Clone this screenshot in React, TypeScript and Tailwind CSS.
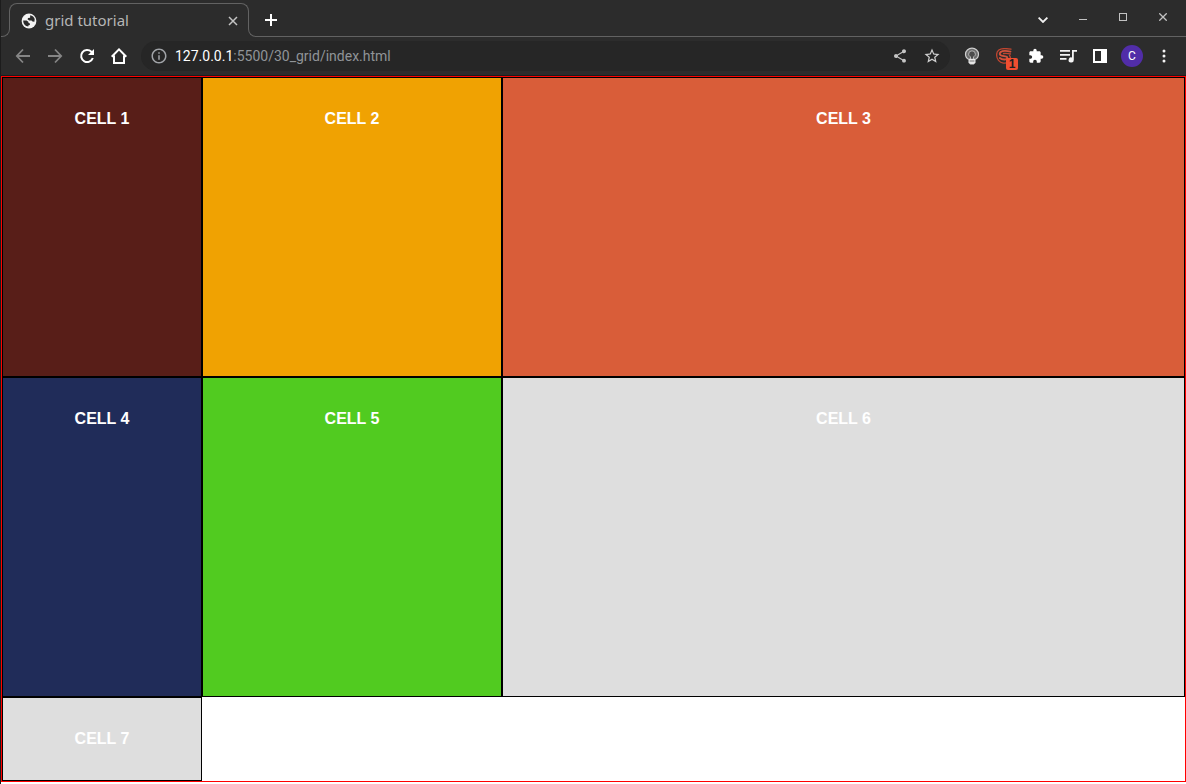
import type { ReactNode } from "react";
import { MdExtension, MdShare, MdStarOutline, MdInfoOutline } from "react-icons/md";

function IconButton({ label, children, className = "" }: { label: string; children: ReactNode; className?: string }) {
  return (
    <button type="button" aria-label={label} className={`flex h-8 w-8 shrink-0 items-center justify-center ${className}`}>
      {children}
    </button>
  );
}

function TabStrip() {
  return (
    <div className="flex h-[37px] items-stretch text-[#f1f1f1]">
      <div className="h-[9px] w-[9px] shrink-0 self-end rounded-br-lg border-r border-b border-[#626262]" />
      <div className="-ml-px mt-[3px] flex h-[26px] w-60 shrink-0 items-end rounded-t-lg border-x border-t border-[#626262] pl-[11px] pr-[7px]">
        <svg viewBox="0 0 16 16" className="h-4 w-4 shrink-0" aria-hidden="true">
          <circle cx="8" cy="8" r="7.4" fill="#f4f4f4" />
          <path d="M2.2 7.6h3.400l1.700 1.200.3 1.200 1.400.5-.2 1.400-1.500.6v1C4.500 13.500 2.200 11.300 2.200 7.600zM9.200 2.200c2.200.4 4 1.900 4.500 3.800l-.3 2.800-1.900-.2-1-1.100-2.300-.1-1.700-1.200.6-1.200 2-.3z" fill="#2b2b2b" />
        </svg>
        <span className="ml-2 flex-1 text-[15px] leading-[18px] whitespace-nowrap text-[#b6b6b6]">grid tutorial</span>
        <button type="button" aria-label="Close tab" className="flex h-4 w-4 items-center justify-center">
          <svg viewBox="0 0 10 10" className="h-[10px] w-[10px]" fill="none" stroke="#c4c4c4" strokeWidth="1.5" aria-hidden="true">
            <path d="M1 1l8 8M9 1 1 9" />
          </svg>
        </button>
      </div>
      <div className="-ml-px h-[9px] w-[9px] shrink-0 self-end rounded-bl-lg border-b border-l border-[#626262]" />
      <div className="flex flex-1 items-center border-b border-[#626262]">
        <button type="button" aria-label="New tab" className="mt-1 flex h-7 w-7 items-center justify-center">
          <svg viewBox="0 0 12 12" className="h-3 w-3" fill="none" stroke="#ffffff" strokeWidth="2" aria-hidden="true">
            <path d="M6 0v12M0 6h12" />
          </svg>
        </button>
        <div className="flex-1" />
        <button type="button" aria-label="Search tabs" className="flex h-8 w-10 items-center justify-center">
          <svg viewBox="0 0 10 6" className="mt-1 h-[6px] w-[10px]" fill="none" stroke="#f1f1f1" strokeWidth="1.8" aria-hidden="true">
            <path d="M.6.6 5 5 9.4.6" />
          </svg>
        </button>
        <button type="button" aria-label="Minimize" className="flex h-8 w-10 items-center justify-center">
          <span className="mt-[3px] h-px w-2 bg-[#c2c2c2]" />
        </button>
        <button type="button" aria-label="Maximize" className="flex h-8 w-10 items-center justify-center">
          <span className="mb-[2px] h-2 w-2 border border-[#c2c2c2]" />
        </button>
        <button type="button" aria-label="Close window" className="mr-[3px] flex h-8 w-10 items-center justify-center">
          <svg viewBox="0 0 8 8" className="mb-[2px] h-2 w-2" fill="none" stroke="#c2c2c2" strokeWidth="1.3" aria-hidden="true">
            <path d="M.3.3l7.4 7.4M7.7.3.3 7.7" />
          </svg>
        </button>
      </div>
    </div>
  );
}

function Toolbar() {
  return (
    <div className="flex h-[38px] items-center px-[6px]">
      <IconButton label="Back">
        <svg viewBox="0 0 16 16" className="h-4 w-4" fill="none" stroke="#858585" strokeWidth="1.8" aria-hidden="true">
          <path d="M15 8H2M8 1.5 1.8 8 8 14.5" />
        </svg>
      </IconButton>
      <IconButton label="Forward">
        <svg viewBox="0 0 16 16" className="h-4 w-4" fill="none" stroke="#858585" strokeWidth="1.8" aria-hidden="true">
          <path d="M1 8h13M8 1.5 14.2 8 8 14.5" />
        </svg>
      </IconButton>
      <IconButton label="Reload">
        <svg viewBox="0 0 16 16" className="h-4 w-4" fill="none" stroke="#ffffff" strokeWidth="2" aria-hidden="true">
          <path d="M13.8 10A6 6 0 1 1 12.4 3.8L13.5 5" />
          <path d="M15 1v6H9z" fill="#ffffff" stroke="none" />
        </svg>
      </IconButton>
      <IconButton label="Home">
        <svg viewBox="0 0 16 16" className="h-4 w-4" fill="none" stroke="#ffffff" strokeWidth="2" aria-hidden="true">
          <path d="M.7 8.8 8 1.4l7.3 7.4M3 7.5V15h10V7.5" />
        </svg>
      </IconButton>
      <div className="ml-[6px] flex h-[30px] flex-1 items-center rounded-full bg-[#262626] pl-[9px] pr-[2px]">
        <MdInfoOutline className="h-[18px] w-[18px] shrink-0 text-[#a0a3a7]" aria-hidden="true" />
        <p className="ml-[7px] flex-1 truncate font-[Roboto,sans-serif] text-sm leading-5 text-[#909498]">
          <span className="text-white">127.0.0.1</span>:5500/30_grid/index.html
        </p>
        <IconButton label="Share">
          <MdShare className="h-4 w-4 text-[#c4c4c4]" />
        </IconButton>
        <IconButton label="Bookmark this page">
          <MdStarOutline className="h-[18px] w-[18px] text-[#d0d0d0]" />
        </IconButton>
      </div>
      <IconButton label="Lamp extension" className="ml-[6px]">
        <svg viewBox="0 0 16 18" className="h-[18px] w-4" fill="none" aria-hidden="true">
          <path d="M5 12.5C2.7 11.4 1.5 9.5 1.5 7.2a6.5 6 0 0 1 13 0c0 2.3-1.2 4.2-3.5 5.3v3L9.5 17h-3L5 15.5z" fill="#6c6c6c" stroke="#cecece" strokeWidth="1.2" />
          <path d="M6.5 12.5V9.8C5.3 9.3 4.6 8.4 4.6 7.2a3.4 3.4 0 0 1 6.8 0c0 1.2-.7 2.1-1.9 2.6v2.7" fill="#4c4c4c" stroke="#b5b5b5" />
          <path d="M5 11.8h6v3.700L9.500 17h-3L5 15.500z" fill="#e6e6e6" />
          <path d="M5.600 14h4.800" stroke="#777777" />
        </svg>
      </IconButton>
      <IconButton label="Spiral extension, 1 notification" className="relative">
        <svg viewBox="0 0 16 16" className="h-4 w-4" fill="none" strokeLinecap="round" aria-hidden="true">
          <path d="M15 1.200C10.500.4 5.500.2 2.800 2-.3 4.200.2 9.500 2.500 12.300 5 15.300 9.500 16 12.500 14" stroke="#c0452f" strokeWidth="1.300" />
          <path d="M14.500 3.600C11 2.800 6.500 2.600 4.700 4 3 5.500 3.700 7.200 5.600 7.700c2.300.6 4.400.2 5.400 1.300.9 1.200-.3 2.300-2.300 2.500-2 .1-3.600-.4-4.900-1.500" stroke="#d2523c" strokeWidth="1.900" />
          <path d="M14.500 6C12 5.300 9.500 5.100 7.600 5.500M13.500 7.500c1.500 2 1.200 4.500-1 6" stroke="#c0452f" strokeWidth="1.300" />
        </svg>
        <span className="absolute top-[18px] left-[18px] flex h-3 w-3 items-center justify-center rounded-xs bg-[#f04e30] font-['Liberation_Sans'] text-xs leading-3 font-bold text-[#202020]">1</span>
      </IconButton>
      <IconButton label="Extensions">
        <MdExtension className="h-4 w-4 text-white" />
      </IconButton>
      <IconButton label="Media controls">
        <svg viewBox="0 0 17 14" className="h-[14px] w-[17px]" aria-hidden="true">
          <path d="M0 1h10v1.7H0zM0 5h10v1.7H0zM0 9h6.5v1.7H0zM12 1h5v1.8h-3.2v8.2a2.6 2.6 0 1 1-1.8-2.5z" fill="#f4f4f4" />
        </svg>
      </IconButton>
      <IconButton label="Side panel">
        <svg viewBox="0 0 14 14" className="h-[14px] w-[14px]" aria-hidden="true">
          <path d="M0 0h14v14H0zM2 2v10h6V2z" fill="#ffffff" fillRule="evenodd" />
        </svg>
      </IconButton>
      <IconButton label="Profile">
        <span className="flex h-[22px] w-[22px] items-center justify-center rounded-full bg-[#512da8] font-[Roboto,sans-serif] text-xs leading-4 text-white">C</span>
      </IconButton>
      <IconButton label="Menu">
        <svg viewBox="0 0 4 14" className="h-[14px] w-1" fill="#f4f4f4" aria-hidden="true">
          <circle cx="2" cy="2" r="1.5" />
          <circle cx="2" cy="7" r="1.5" />
          <circle cx="2" cy="12" r="1.5" />
        </svg>
      </IconButton>
    </div>
  );
}

const cells = [
  { name: "CELL 1", color: "bg-[#581e18]" },
  { name: "CELL 2", color: "bg-[#f0a202]" },
  { name: "CELL 3", color: "bg-[#d95d39]" },
  { name: "CELL 4", color: "bg-[#202c59]" },
  { name: "CELL 5", color: "bg-[#51cb20]" },
  { name: "CELL 6", color: "bg-[#dedede]" },
  { name: "CELL 7", color: "bg-[#dedede]" },
];

export default function App() {
  return (
    <div className="min-h-screen border-l border-[#1c1c1c] bg-white">
      <header className="border-b border-[#1c1c1c] bg-[#2c2c2c] font-['Noto_Sans',sans-serif]">
        <TabStrip />
        <Toolbar />
      </header>
      <main className="grid grid-cols-[200px_300px_1fr] grid-rows-[300px_320px] border border-[#ff0000] font-['Liberation_Sans',Arial,sans-serif]">
        {cells.map((cell) => (
          <div key={cell.name} className={`border border-black p-8 text-center text-base leading-[18px] font-bold text-white ${cell.color}`}>
            {cell.name}
          </div>
        ))}
      </main>
    </div>
  );
}
